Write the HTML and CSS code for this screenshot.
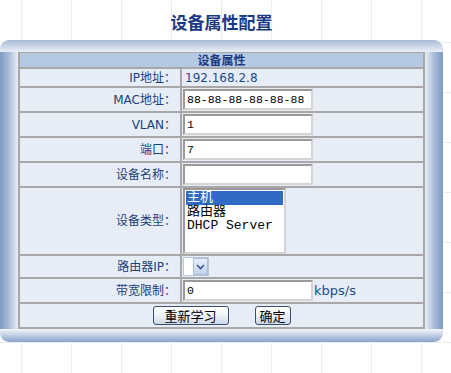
FILE: index.html
```html
<!DOCTYPE html>
<html>
<head>
<meta charset="utf-8">
<link rel="stylesheet" href="styles.css">
</head>
<body>
<div class="title">设备属性配置</div>
<div class="panel">
  <div class="bar-top"></div>
  <div class="middle">
    <div class="side side-left"></div>
    <table class="props">
      <tr class="head"><td colspan="2">设备属性</td></tr>
      <tr class="r-ip"><td class="lbl">IP地址：</td><td class="val"><span class="ipval">192.168.2.8</span></td></tr>
      <tr class="r-in"><td class="lbl">MAC地址：</td><td class="val"><input class="txt" type="text" value="88-88-88-88-88-88"></td></tr>
      <tr class="r-in"><td class="lbl">VLAN：</td><td class="val"><input class="txt" type="text" value="1"></td></tr>
      <tr class="r-in"><td class="lbl">端口：</td><td class="val"><input class="txt" type="text" value="7"></td></tr>
      <tr class="r-in"><td class="lbl">设备名称：</td><td class="val"><input class="txt" type="text" value=""></td></tr>
      <tr class="r-list"><td class="lbl">设备类型：</td><td class="val">
        <div class="listbox">
          <div class="opt sel">主机</div>
          <div class="opt">路由器</div>
          <div class="opt">DHCP Server</div>
        </div>
      </td></tr>
      <tr class="r-sel"><td class="lbl">路由器IP：</td><td class="val">
        <div class="combo"><span class="combo-field"></span><span class="combo-btn"><svg width="9" height="6" viewBox="0 0 9 6"><path d="M1 1 L4.5 4.5 L8 1" fill="none" stroke="#3b5a8c" stroke-width="1.6"/></svg></span></div>
      </td></tr>
      <tr class="r-in"><td class="lbl">带宽限制：</td><td class="val"><div class="inrow"><input class="txt" type="text" value="0"><span class="unit">kbps/s</span></div></td></tr>
      <tr class="r-btn"><td colspan="2"><div class="btns"><button class="btn btn-wide">重新学习</button><button class="btn btn-narrow">确定</button></div></td></tr>
    </table>
    <div class="side side-right"></div>
  </div>
  <div class="bar-bottom"></div>
</div>
</body>
</html>
```
FILE: styles.css
```css
html, body {
  margin: 0;
  padding: 0;
}
body {
  width: 451px;
  height: 373px;
  overflow: hidden;
  background-color: #fff;
  background-image:
    linear-gradient(to right, #ececec 1px, transparent 1px),
    linear-gradient(to bottom, #ececec 1px, transparent 1px);
  background-size: 50px 50px;
  background-position: 21px 42px;
  font-family: Tahoma, "DejaVu Sans", "Noto Sans CJK SC", sans-serif;
}
.title {
  width: 443px;
  height: 40px;
  line-height: 44px;
  text-align: center;
  font-family: "Noto Sans CJK SC", sans-serif;
  font-size: 17px;
  font-weight: bold;
  color: #1b3a84;
}
.panel {
  width: 443px;
  display: flex;
  flex-direction: column;
}
.bar-top {
  height: 12px;
  border-radius: 9px 9px 0 0;
  background: linear-gradient(to bottom, #a6b9d4 0%, #c9d6e7 50%, #e9eff7 100%);
}
.bar-bottom {
  height: 13px;
  border-radius: 0 0 9px 9px;
  background: linear-gradient(to bottom, #f3f6fa 0%, #c4d2e6 45%, #86a2c8 100%);
}
.middle {
  display: flex;
}
.side {
  width: 18px;
  flex: none;
}
.side-left {
  background: linear-gradient(to right, #7d9ac4 0%, #a9bdd9 50%, #e8eef6 100%);
}
.side-right {
  background: linear-gradient(to right, #e8eef6 0%, #a9bdd9 50%, #7d9ac4 100%);
}
.props {
  width: 407px;
  border-collapse: collapse;
  background: #e6edf6;
  font-size: 12px;
  line-height: 14px;
  color: #1e3f7c;
}
.props td {
  border: 2px solid #a8a8a8;
  padding: 0;
}
.props tr:first-child td { border-top-width: 1px; }
.head td {
  height: 14px;
  background: #b5c9e2;
  text-align: center;
  font-weight: bold;
  color: #1b3a84;
  font-family: "Noto Sans CJK SC", sans-serif;
}
.lbl {
  width: 156px;
  text-align: right;
  padding-right: 4px !important;
}
.val {
  padding-left: 1px !important;
}
.r-ip td { height: 17px; }
.r-in td { height: 23px; }
.r-list td { height: 66px; }
.r-sel td { height: 21px; }
.r-btn td { height: 23px; }
.ipval {
  padding-left: 2px;
  color: #1e4a8c;
}
.inrow {
  display: flex;
  align-items: center;
}
.txt {
  display: block;
  box-sizing: border-box;
  width: 130px;
  height: 21px;
  margin: 0;
  border: 2px solid;
  border-color: #9a9a9a #d4d4d4 #d4d4d4 #9a9a9a;
  background: #fff;
  padding: 0 3px 0 2px;
  font-family: "Liberation Mono", monospace;
  font-size: 11.5px;
  color: #000;
}
.unit {
  color: #1e4a8c;
  font-size: 13px;
  padding-left: 1px;
}
.listbox {
  box-sizing: border-box;
  width: 103px;
  height: 66px;
  border: 2px solid;
  border-color: #9a9a9a #d4d4d4 #d4d4d4 #9a9a9a;
  background: #fff;
  padding: 1px;
  font-family: "Liberation Mono", "Noto Sans CJK SC", monospace;
  font-size: 13px;
  color: #000;
}
.opt {
  height: 14px;
  line-height: 14px;
  padding-left: 1px;
  white-space: nowrap;
}
.opt.sel {
  background: #316ac5;
  color: #fff;
}
.combo {
  display: flex;
  width: 26px;
  height: 19px;
  box-sizing: border-box;
  border: 1px solid #b9c7d9;
  background: #fff;
}
.combo-field { width: 9px; }
.combo-btn {
  flex: 1;
  display: flex;
  align-items: center;
  justify-content: center;
  background: linear-gradient(to bottom, #e6eefa, #c3d3ec);
  border: 1px solid #a9bcd9;
}
.btns {
  display: flex;
  justify-content: center;
  gap: 26px;
}
.btn {
  box-sizing: border-box;
  height: 19px;
  padding: 0;
  border: 1px solid #3d4f73;
  border-radius: 3px;
  background: linear-gradient(to bottom, #ffffff 0%, #eef2f8 50%, #cdd8e8 100%);
  font-family: "Noto Sans CJK SC", sans-serif;
  font-size: 13px;
  line-height: 16px;
  color: #000;
}
.btn-wide { width: 76px; }
.btn-narrow { width: 36px; }
```
